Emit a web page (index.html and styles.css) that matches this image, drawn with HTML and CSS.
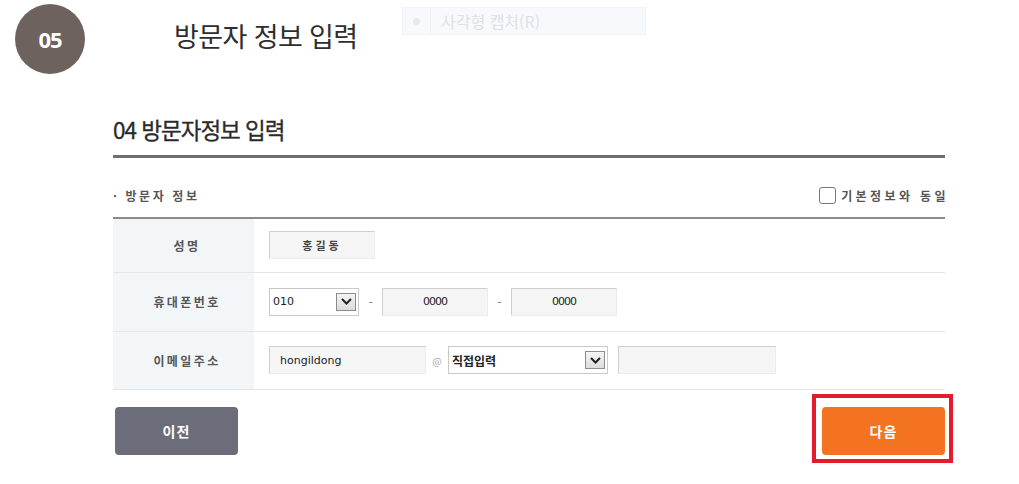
FILE: index.html
```html
<!DOCTYPE html>
<html lang="ko">
<head>
<meta charset="utf-8">
<title>방문자 정보 입력</title>
<link rel="stylesheet" href="styles.css">
</head>
<body>
  <div class="step">
    <div class="step-num">05</div>
    <div class="step-title">방문자 정보 입력</div>
  </div>

  <!-- capture tool overlay left in the screenshot -->
  <div class="capture"><span class="dot"></span><span class="cap-text">사각형 캡처(R)</span></div>

  <div class="form">
    <h2>04 방문자정보 입력</h2>

    <div class="sub">
      <span class="sub-title">· 방문자 정보</span>
      <label class="same"><span class="chk"></span>기본정보와 동일</label>
    </div>

    <table class="tbl">
      <tr>
        <th>성명</th>
        <td><div class="cell"><span class="inp name">홍길동</span></div></td>
      </tr>
      <tr>
        <th>휴대폰번호</th>
        <td>
          <div class="cell">
            <span class="sel phone">010<span class="arrow"><svg width="11" height="7" viewBox="0 0 11 7"><path d="M1 1l4.5 4.5L10 1" fill="none" stroke="#222" stroke-width="2"/></svg></span></span>
            <span class="dash">-</span>
            <span class="inp mid">0000</span>
            <span class="dash">-</span>
            <span class="inp mid">0000</span>
          </div>
        </td>
      </tr>
      <tr>
        <th>이메일주소</th>
        <td>
          <div class="cell">
            <span class="inp mail">hongildong</span>
            <span class="at">@</span>
            <span class="sel domain">직접입력<span class="arrow"><svg width="11" height="7" viewBox="0 0 11 7"><path d="M1 1l4.5 4.5L10 1" fill="none" stroke="#222" stroke-width="2"/></svg></span></span>
            <span class="inp blank"></span>
          </div>
        </td>
      </tr>
    </table>

    <div class="btns">
      <button class="btn prev">이전</button>
      <div class="mark"><button class="btn next">다음</button></div>
    </div>
  </div>
</body>
</html>
```

FILE: styles.css
```css
*{box-sizing:border-box}
body{
  margin:0;background:#fff;color:#333;
  font-family:"Noto Sans CJK KR","Noto Sans",sans-serif;
}

/* ---- step header ---- */
.step{display:flex;align-items:center;padding:3px 0 0 15px;height:74px}
.step-num{
  width:70px;height:70px;border-radius:50%;background:#6e625e;color:#fff;
  display:flex;align-items:center;justify-content:center;
  font-family:"Open Sans",sans-serif;font-weight:700;font-size:22px;letter-spacing:-1px;
}
.step-title{margin:-6px 0 0 89px;font-size:27px;color:#2e2e2e;letter-spacing:-.6px}

.capture{
  position:absolute;left:402px;top:7px;width:244px;height:28px;
  background:#f7f9fc;border:1px solid #f0f3f7;display:flex;align-items:center;
}
.capture .dot{width:7px;height:7px;border-radius:50%;background:#e6e8ec;margin:0 10px 0 10px}
.capture .cap-text{border-left:1px solid #eef1f5;height:100%;padding-left:10px;display:flex;align-items:center;font-size:16px;color:#dde1e7}

/* ---- form ---- */
.form{margin:0 0 0 113px;width:832px}
.form h2{
  margin:40px 0 0;padding-bottom:11px;font-size:22.5px;font-weight:400;color:#2a2a2a;letter-spacing:-1px;
  border-bottom:3px solid #6f6f6f;line-height:30px;-webkit-text-stroke:.3px #2a2a2a;
}
.sub{display:flex;justify-content:space-between;align-items:center;height:59px;padding-top:16px}
.sub-title{font-size:12px;font-weight:700;color:#555;letter-spacing:2.6px}
.same{display:flex;align-items:center;font-size:12px;font-weight:700;color:#555;letter-spacing:3.4px;margin-right:-4px}
.chk{width:17px;height:17px;border:1px solid #777;border-radius:3px;margin-right:5px;background:#fff}

.tbl{width:100%;border-collapse:collapse;border-top:2px solid #8a8a8a}
.tbl th{
  width:141px;background:#f3f6f9;font-size:12px;font-weight:700;color:#555;letter-spacing:2.4px;
  border-bottom:1px solid #e6e6e6;padding:0 0 0 7px;
}
.tbl td{padding:0 0 0 15px;border-bottom:1px solid #e6e6e6;font-size:12px}
.tbl tr:first-child th,.tbl tr:first-child td{height:54px}
.tbl tr:nth-child(2) th,.tbl tr:nth-child(2) td{height:59px}
.tbl tr:nth-child(3) th,.tbl tr:nth-child(3) td{height:58px}
.cell{display:flex;align-items:center}

.inp,.sel{
  display:flex;align-items:center;height:28px;
  background:#f5f5f5;border:1px solid #ececec;border-top-color:#cfcfcf;border-left-color:#cfcfcf;
  font-family:"DejaVu Sans",sans-serif;font-size:11px;color:#222;
}
.inp.name{width:106px;justify-content:center;font-family:"Noto Sans CJK KR",sans-serif;font-weight:700;color:#444;letter-spacing:3px}
.inp.mid{width:106px;justify-content:center;letter-spacing:-1px}
.inp.mail{width:157px;padding-left:10px}
.inp.blank{width:158px;margin-left:10px}
.sel{background:#fff;border:1px solid #c9c9c9;padding-left:3px;justify-content:space-between;padding-right:2px}
.sel.phone{width:90px}
.sel.domain{width:160px;font-family:"Noto Sans CJK KR",sans-serif;font-weight:700;font-size:12px}
.arrow{
  width:20px;height:18px;border:1px solid #8c8c8c;background:linear-gradient(#f4f4f4,#dcdcdc);
  display:flex;align-items:center;justify-content:center;
}
.dash{width:23px;text-align:center;color:#777}
.at{width:22px;text-align:center;color:#aaa;font-size:10px}

.btns{display:flex;justify-content:space-between;align-items:flex-start;margin-top:4px}
.btn{
  width:123px;height:48px;border:none;border-radius:4px;color:#fff;
  font-family:"Noto Sans CJK KR",sans-serif;font-size:14px;font-weight:700;letter-spacing:1px;
}
.prev{background:#6b6e7a;margin:13px 0 0 2px}
.next{background:#f47321;display:block}
.mark{border:4px solid #e31b2d;padding:9px 4px 4px 6px;margin-right:-8px}
```
